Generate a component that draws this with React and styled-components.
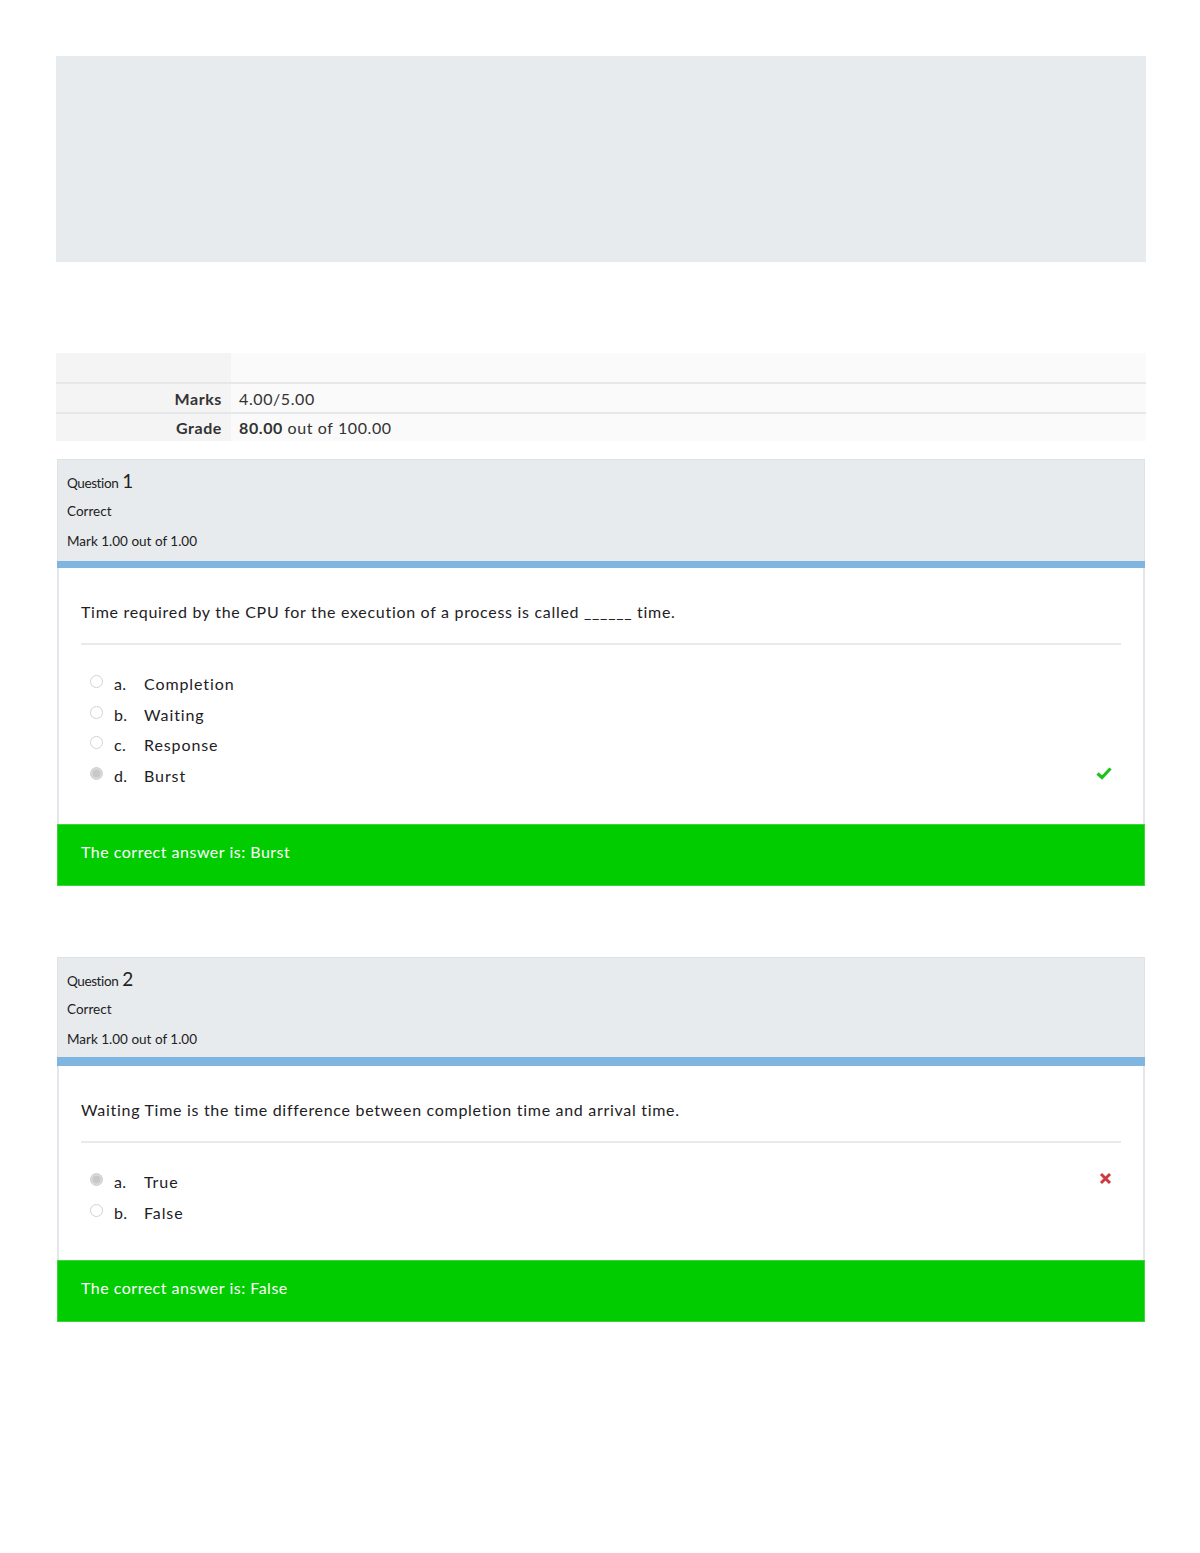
import React from "react";
import styled, { createGlobalStyle } from "styled-components";

const Global = createGlobalStyle`
  html, body { margin: 0; padding: 0; background: #fff; }
  body { font-family: "Lato", "Open Sans", sans-serif; color: #1d2125; }
`;

const Page = styled.div`
  width: 1200px;
  min-height: 1553px;
  box-sizing: border-box;
  padding: 56px 54px 0 56px;
`;

const Banner = styled.div`
  height: 206px;
  background: #e7ebee;
`;

const Summary = styled.table`
  margin-top: 91px;
  width: 100%;
  border-collapse: collapse;
  font-size: 16px;
  letter-spacing: 0.6px;
`;

const Row = styled.tr`
  height: ${(p) => p.$h || 29}px;
  border-top: ${(p) => (p.$first ? "none" : "2px solid #e4e8eb")};
`;

const Th = styled.th`
  width: 175px;
  background: #f4f4f4;
  text-align: right;
  font-weight: 700;
  padding: 0 9px 0 0;
  box-sizing: border-box;
  color: #333;
`;

const Td = styled.td`
  background: #fafafa;
  padding: 0 8px;
  color: #333;
`;

const Question = styled.div`
  margin: ${(p) => p.$mt}px 1px 0 1px;
`;

const Header = styled.div`
  background: #e7ebee;
  border: 1px solid #dde2e6;
  border-bottom: none;
  padding: 9px 9px 10px 9px;
  height: ${(p) => p.$h}px;
  box-sizing: border-box;
  font-size: 13.5px;
  color: #222;
  display: flex;
  flex-direction: column;
  gap: 11px;
`;

const QTitle = styled.div`
  display: flex;
  align-items: baseline;
  gap: 4px;
  letter-spacing: -0.4px;
`;

const QNum = styled.span`
  font-size: 19px;
  font-weight: 400;
`;

const Small = styled.div`
  margin-top: ${(p) => p.$mt || 0}px;
`;

const BlueBar = styled.div`
  height: ${(p) => p.$h}px;
  background: #7fb5de;
`;

const Content = styled.div`
  background: #fff;
  border-left: 2px solid #e3e6ea;
  border-right: 2px solid #e3e6ea;
  padding: 34px 22px 0 22px;
  height: ${(p) => p.$h}px;
  box-sizing: border-box;
  position: relative;
`;

const Prompt = styled.div`
  font-size: 16px;
  letter-spacing: 0.7px;
  padding-bottom: 22px;
  border-bottom: 2px solid #e8eaed;
  color: #1d2125;
`;

const Options = styled.div`
  margin-top: 28px;
  display: flex;
  flex-direction: column;
  gap: 9px;
`;

const Option = styled.div`
  display: flex;
  align-items: center;
  height: 21.5px;
  font-size: 16px;
  letter-spacing: 0.9px;
  position: relative;
`;

const Radio = styled.span`
  width: 13px;
  height: 13px;
  border-radius: 50%;
  box-sizing: border-box;
  border: 1px solid #cfd3d6;
  background: ${(p) => (p.$checked ? "#c8c8c8" : "#fff")};
  box-shadow: ${(p) => (p.$checked ? "inset 0 0 0 1.5px #dcdcdc" : "none")};
  margin-left: 9px;
  margin-right: 11px;
  position: relative;
  top: -2px;
  flex: none;
`;

const Letter = styled.span`
  width: 30px;
  color: #1d2125;
  letter-spacing: 0.4px;
`;

const Mark = styled.span`
  position: absolute;
  right: 9px;
  top: 1px;
  display: flex;
`;

const Feedback = styled.div`
  background: #00cc00;
  color: #fff;
  height: 62px;
  display: flex;
  align-items: center;
  padding: 0 23px 8px 23px;
  font-size: 16px;
  letter-spacing: 0.5px;
  box-sizing: border-box;
  border: 1px solid #3cd53c;
`;

const Check = () => (
  <svg width="16" height="14" viewBox="0 0 16 14">
    <path d="M1.5 7.5 L6 11.5 L14.5 2.5" stroke="#1dc31d" strokeWidth="3.2" fill="none" strokeLinejoin="miter" />
  </svg>
);

const Cross = () => (
  <svg width="13" height="13" viewBox="0 0 13 13">
    <path d="M2 2 L11 11 M11 2 L2 11" stroke="#d0383f" strokeWidth="3" fill="none" />
  </svg>
);

const questions = [
  {
    n: 1,
    mt: 18,
    headerH: 102,
    barH: 7,
    contentH: 256,
    prompt: (
      <>Time required by the CPU for the execution of a process is called ______ time.</>
    ),
    options: [
      { l: "a.", t: "Completion" },
      { l: "b.", t: "Waiting" },
      { l: "c.", t: "Response" },
      { l: "d.", t: "Burst", checked: true, mark: "check" },
    ],
    feedback: "The correct answer is: Burst",
  },
  {
    n: 2,
    mt: 71,
    headerH: 100,
    barH: 9,
    contentH: 194,
    prompt: <>Waiting Time is the time difference between completion time and arrival time.</>,
    options: [
      { l: "a.", t: "True", checked: true, mark: "cross" },
      { l: "b.", t: "False" },
    ],
    feedback: "The correct answer is: False",
  },
];

export default function App() {
  return (
    <Page>
      <Global />
      <Banner />
      <Summary>
        <tbody>
          <Row $first $h={30}>
            <Th />
            <Td />
          </Row>
          <Row $h={30}>
            <Th>Marks</Th>
            <Td>4.00/5.00</Td>
          </Row>
          <Row $h={28}>
            <Th>Grade</Th>
            <Td>
              <b>80.00</b> out of 100.00
            </Td>
          </Row>
        </tbody>
      </Summary>
      {questions.map((q) => (
        <Question key={q.n} $mt={q.mt}>
          <Header $h={q.headerH}>
            <QTitle>
              Question <QNum>{q.n}</QNum>
            </QTitle>
            <Small>Correct</Small>
            <Small $mt={3}>Mark 1.00 out of 1.00</Small>
          </Header>
          <BlueBar $h={q.barH} />
          <Content $h={q.contentH}>
            <Prompt>{q.prompt}</Prompt>
            <Options>
              {q.options.map((o) => (
                <Option key={o.l}>
                  <Radio $checked={o.checked} />
                  <Letter>{o.l}</Letter>
                  {o.t}
                  {o.mark && <Mark>{o.mark === "check" ? <Check /> : <Cross />}</Mark>}
                </Option>
              ))}
            </Options>
          </Content>
          <Feedback>{q.feedback}</Feedback>
        </Question>
      ))}
    </Page>
  );
}
